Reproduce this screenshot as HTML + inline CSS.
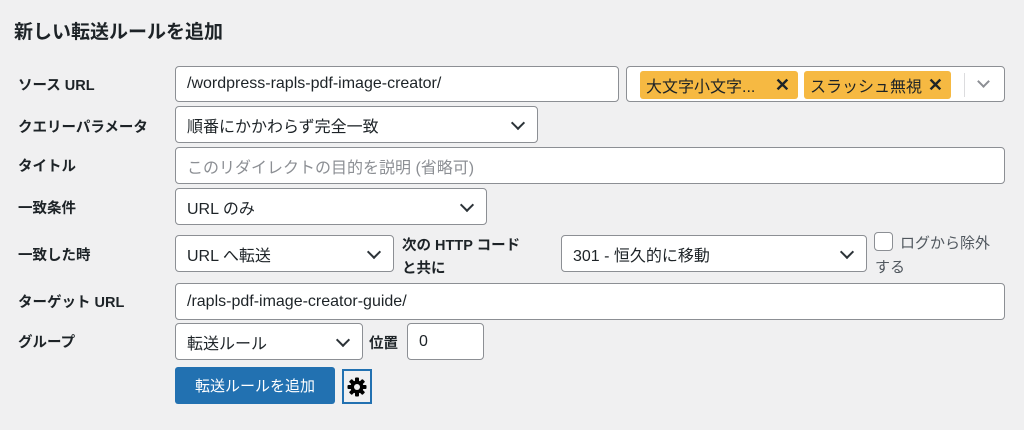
<!DOCTYPE html>
<html><head><meta charset="utf-8"><style>
*{box-sizing:border-box;margin:0;padding:0}
body{width:1024px;height:430px;background:#f0f0f1;font-family:"Liberation Sans","Noto Sans CJK JP",sans-serif;color:#1d2327;position:relative;overflow:hidden}
.a{position:absolute}
.t{font-size:19px;font-weight:bold;left:14px;top:17px}
.l{font-size:14.5px;font-weight:bold;left:18px}
.in{position:absolute;background:#fff;border:1px solid #8c8f94;border-radius:4px;font-size:16px;padding-left:11px;display:flex;align-items:center}
.ph{color:#8c8f94}
.sel::after{content:"";position:absolute;right:14px;top:50%;width:8px;height:8px;border-right:2px solid #2c3338;border-bottom:2px solid #2c3338;transform:translateY(-70%) rotate(45deg)}
.tag{position:absolute;top:4px;height:28px;background:#f6b942;border-radius:3px;font-size:16px;display:flex;align-items:center;padding-left:6px}
.x{position:absolute;right:8px;font-weight:bold;font-size:18px}
</style></head><body>
<div class="a t">新しい転送ルールを追加</div>
<div class="a l" style="top:74px">ソース URL</div>
<div class="a l" style="top:116px">クエリーパラメータ</div>
<div class="a l" style="top:155px">タイトル</div>
<div class="a l" style="top:197px">一致条件</div>
<div class="a l" style="top:244px">一致した時</div>
<div class="a l" style="top:291px">ターゲット URL</div>
<div class="a l" style="top:331px">グループ</div>

<div class="in" style="left:175px;top:66px;width:444px;height:36px">/wordpress-rapls-pdf-image-creator/</div>
<div class="in" style="left:626px;top:66px;width:379px;height:36px">
 <div class="tag" style="left:13px;width:158px">大文字小文字...<span class="x">✕</span></div>
 <div class="tag" style="left:177px;width:147px">スラッシュ無視<span class="x">✕</span></div>
 <div class="a" style="left:337px;top:6px;width:1px;height:24px;background:#dcdcde"></div>
 <div class="a" style="left:352px;top:10px;width:9px;height:9px;border-right:2px solid #8c8f94;border-bottom:2px solid #8c8f94;transform:rotate(45deg)"></div>
</div>
<div class="in sel" style="left:175px;top:106px;width:363px;height:37px">順番にかかわらず完全一致</div>
<div class="in ph" style="left:175px;top:147px;width:830px;height:37px">このリダイレクトの目的を説明 (省略可)</div>
<div class="in sel" style="left:175px;top:188px;width:312px;height:37px">URL のみ</div>
<div class="in sel" style="left:175px;top:235px;width:219px;height:37px">URL へ転送</div>
<div class="a" style="left:402px;top:235px;font-size:14.5px;font-weight:bold;line-height:23px">次の HTTP コード<br>と共に</div>
<div class="in sel" style="left:561px;top:235px;width:306px;height:37px">301 - 恒久的に移動</div>
<div class="a" style="left:874px;top:232px;width:19px;height:19px;border:1px solid #8c8f94;border-radius:4px;background:#fff"></div>
<div class="a" style="left:875px;top:232px;font-size:15px;color:#50575e;line-height:24px">&nbsp;&nbsp;&nbsp;&nbsp;&nbsp;&nbsp;ログから除外<br>する</div>
<div class="in" style="left:175px;top:283px;width:830px;height:37px">/rapls-pdf-image-creator-guide/</div>
<div class="in sel" style="left:175px;top:323px;width:188px;height:37px">転送ルール</div>
<div class="a" style="left:369px;top:332px;font-size:14.5px;font-weight:bold">位置</div>
<div class="in" style="left:407px;top:323px;width:77px;height:37px">0</div>
<div class="a" style="left:175px;top:367px;width:160px;height:37px;background:#2271b1;border-radius:3px;color:#fff;font-size:15px;display:flex;align-items:center;justify-content:center">転送ルールを追加</div>
<div class="a" style="left:342px;top:369px;width:30px;height:35px;border:2px solid #2271b1;background:#f0f0f1;display:flex;align-items:center;justify-content:center">
<svg width="20" height="20" viewBox="0 0 20 20"><g fill="#000"><circle cx="10" cy="10" r="6.5"/><g id="k"><rect x="8" y="0.5" width="4" height="19" rx="1"/></g><use href="#k" transform="rotate(45 10 10)"/><use href="#k" transform="rotate(90 10 10)"/><use href="#k" transform="rotate(135 10 10)"/></g><circle cx="10" cy="10" r="3" fill="#f0f0f1"/></svg>
</div>
</body></html>
